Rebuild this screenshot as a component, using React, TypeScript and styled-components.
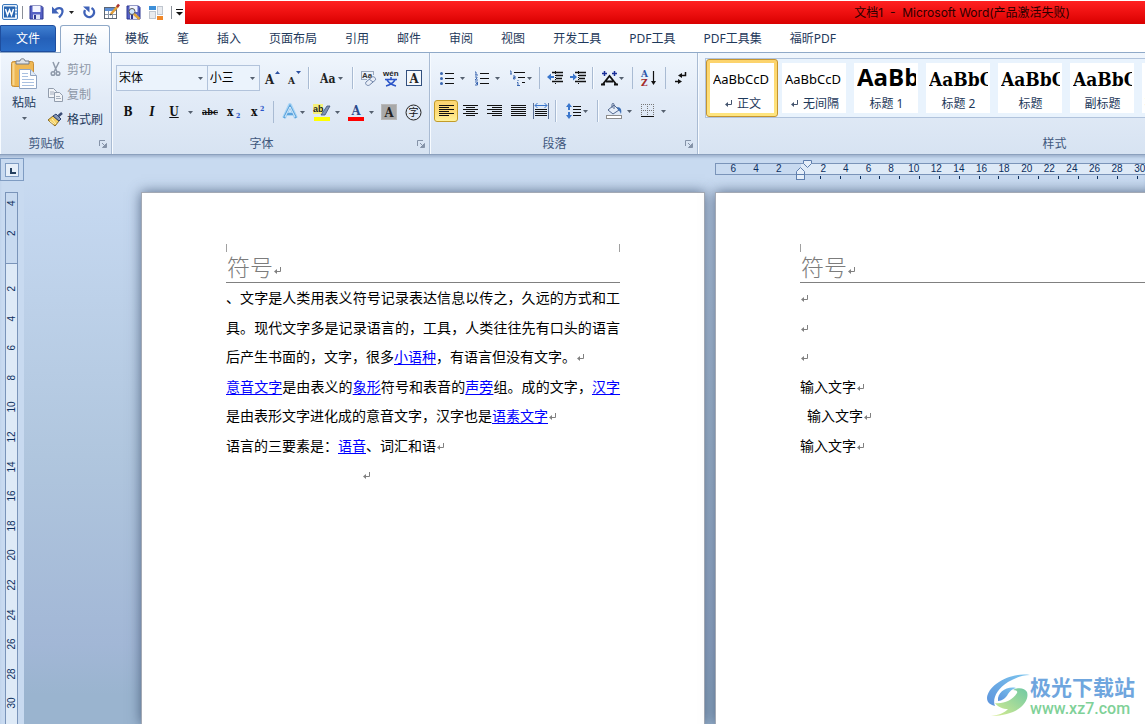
import React from "react";
import styled, { createGlobalStyle, css } from "styled-components";

const ui = `"Noto Sans", "Noto Sans CJK SC", sans-serif`;
const ink = "#1e395b";

const GlobalStyle = createGlobalStyle`
  * { box-sizing: border-box; }
  body { margin: 0; overflow: hidden; font: 12px/16px ${ui}; color: ${ink}; }
  button, select { font: inherit; color: inherit; margin: 0; }
  svg { display: block; flex: none; overflow: visible; }
`;

/* ---------- window ---------- */
const Window = styled.div`
  position: relative;
  display: flex;
  flex-direction: column;
  height: 100vh;
  overflow: hidden;
  background: #fff;
`;

const TitleRow = styled.header`
  display: flex;
  flex: none;
  height: 24px;
`;
const QuickBar = styled.div`
  display: flex;
  align-items: center;
  width: 185px;
  flex: none;
`;
const QuickButton = styled.button<{ $w: number }>`
  display: flex;
  align-items: center;
  justify-content: center;
  gap: 4px;
  width: ${(p) => p.$w}px;
  height: 22px;
  padding: 0;
  border: 0;
  background: none;
`;
const QuickLine = styled.span`
  width: 1px;
  height: 13px;
  margin: 0 3px;
  background: #8a8f98;
`;
const TitleBar = styled.div`
  flex: 1;
  margin-top: 1px;
  padding-right: 75px;
  text-align: right;
  font-family: Inter, "Noto Sans CJK SC", sans-serif;
  line-height: 24px;
  color: #2c0000;
  white-space: pre;
  background: linear-gradient(#ff2222, #ee1010 50%, #d90000);
`;

/* ---------- tabs ---------- */
const TabRow = styled.nav`
  display: flex;
  flex: none;
  height: 29px;
  padding-top: 1px;
  border-bottom: 1px solid #8fa9c8;
`;
const Tab = styled.button<{ $kind?: "file" | "active" }>`
  height: 27px;
  padding: 0 14px;
  border: 0;
  background: none;
  white-space: nowrap;
  ${(p) =>
    p.$kind === "file" &&
    css`
      width: 56px;
      color: #fff;
      border: 1px solid #1f4e9e;
      border-radius: 0 3px 0 0;
      background: linear-gradient(#3f7fd0, #2560b8 50%, #2a6cc6);
    `}
  ${(p) =>
    p.$kind === "active" &&
    css`
      width: 50px;
      height: 28px;
      margin: 0 1px 0 4px;
      padding: 0 12px;
      border: 1px solid #8fa9c8;
      border-bottom: 0;
      border-radius: 3px 3px 0 0;
      background: linear-gradient(#ffffff, #eef5fd);
    `}
`;

/* ---------- ribbon ---------- */
const Ribbon = styled.section`
  display: flex;
  flex: none;
  height: 102px;
  border-bottom: 1px solid #8ba0bd;
  background: linear-gradient(#f0f6fd, #e2ebf7 45%, #d7e3f2);
  overflow: hidden;
`;
const Group = styled.div<{ $w: number }>`
  display: flex;
  flex-direction: column;
  flex: none;
  width: ${(p) => p.$w}px;
  border-right: 1px solid #a9bbd3;
  box-shadow: inset 1px 0 #f7fbff;
`;
const GroupBody = styled.div`
  height: 81px;
  padding: 0 4px;
`;
const GroupFoot = styled.div`
  display: flex;
  align-items: center;
  height: 20px;
`;
const GroupName = styled.span`
  flex: 1;
  text-align: center;
  color: #3f577c;
`;
const Launcher = styled.button`
  width: 18px;
  padding: 0 4px 0 6px;
  border: 0;
  background: none;
`;
const ToolRow = styled.div<{ $top: number }>`
  display: flex;
  align-items: center;
  height: 26px;
  margin-top: ${(p) => p.$top}px;
`;
const Tool = styled.button<{ $w: number; $gap?: number; $on?: boolean }>`
  display: flex;
  align-items: center;
  justify-content: center;
  gap: ${(p) => p.$gap ?? 4}px;
  flex: none;
  width: ${(p) => p.$w}px;
  height: 22px;
  padding: 0;
  border: 1px solid transparent;
  border-radius: 3px;
  background: none;
  ${(p) =>
    p.$on &&
    css`
      border-color: #c29b29;
      background: linear-gradient(#fcd673, #fddb76 50%, #fff29a);
    `}
`;
const Divider = styled.span`
  width: 2px;
  height: 22px;
  margin: 0 3px;
  border-left: 1px solid #a9bbd3;
  background: #f7fbff;
`;
const Letter = styled.span<{ $size?: number; $italic?: boolean; $deco?: string }>`
  font: ${(p) => (p.$italic ? "italic " : "")}bold ${(p) => p.$size ?? 12}px/16px "DejaVu Serif Condensed", serif;
  color: #111;
  text-decoration: ${(p) => p.$deco ?? "none"};
`;

const PasteColumn = styled.div`
  display: flex;
  gap: 4px;
  padding-top: 4px;
`;
const PasteButton = styled.button`
  display: flex;
  flex-direction: column;
  align-items: center;
  gap: 6px;
  width: 40px;
  padding: 1px 0 0;
  border: 0;
  background: none;
`;
const ClipList = styled.div`
  display: flex;
  flex-direction: column;
`;
const ClipButton = styled.button<{ $dim?: boolean }>`
  display: flex;
  align-items: center;
  gap: 4px;
  height: 25px;
  padding: 0;
  border: 0;
  background: none;
  white-space: nowrap;
  color: ${(p) => (p.$dim ? "#8d97a6" : ink)};
  svg { width: 15px; }
`;

const Combo = styled.label<{ $w: number }>`
  position: relative;
  width: ${(p) => p.$w}px;
  height: 26px;
  margin-right: -1px;
  border: 1px solid #b2c3db;
  background: #ebf3fc;
  svg { position: absolute; right: 4px; top: 11px; pointer-events: none; }
`;
const ComboSelect = styled.select`
  appearance: none;
  width: 100%;
  height: 24px;
  padding: 0 2px;
  border: 0;
  background: none;
  color: #000;
`;

/* ---------- style gallery ---------- */
const Gallery = styled.div`
  display: flex;
  height: 60px;
  margin: 5px 0 0 3px;
  border: 1px solid #b1c3dc;
  background: #e9f3fd;
`;
const StyleCard = styled.button<{ $on?: boolean }>`
  flex: none;
  width: 72px;
  height: 58px;
  padding: 3px;
  border: 1px solid ${(p) => (p.$on ? "#c49430" : "transparent")};
  border-radius: 3px;
  background: ${(p) => (p.$on ? "linear-gradient(#fcd36c, #fee57f)" : "none")};
`;
const CardFace = styled.span`
  display: flex;
  flex-direction: column;
  height: 50px;
  padding: 0 2px 0 3px;
  background: #fff;
  overflow: hidden;
`;
const Sample = styled.span<{ $kind: "body" | "head" | "serif" }>`
  height: 33px;
  overflow: hidden;
  text-align: left;
  white-space: nowrap;
  color: #000;
  font: ${(p) =>
    p.$kind === "body"
      ? `13px/32px "Noto Sans", sans-serif`
      : p.$kind === "head"
      ? `bold 24px/28px "Open Sans", sans-serif`
      : `bold 19px/32px "DejaVu Serif Condensed", serif`};
`;
const CardName = styled.span`
  display: flex;
  align-items: center;
  justify-content: center;
  gap: 4px;
  white-space: nowrap;
`;

/* ---------- workspace ---------- */
const Workspace = styled.main`
  display: flex;
  flex: 1;
  min-height: 0;
  background: #c8daf0;
  box-shadow: inset 0 3px 3px -1px #9fb3cf;
`;
const SideColumn = styled.div`
  display: flex;
  flex-direction: column;
  flex: none;
  width: 24px;
`;
const CornerButton = styled.button`
  display: flex;
  align-items: center;
  justify-content: center;
  width: 24px;
  height: 23px;
  margin: 3px 0 11px;
  padding: 0;
  border: 1px solid #7f9cc2;
  background: #c8daf0;
`;
const VRuler = styled.div`
  flex: 1;
  width: 13px;
  margin-left: 5px;
  border: 1px solid #7a94b9;
  border-bottom: 0;
  background: #deeaf7;
  font: 10px/11px "Liberation Sans", sans-serif;
  color: #0c2f5e;
`;
const VMargin = styled.div`
  display: grid;
  grid-auto-rows: 20px;
  row-gap: 10px;
  height: 71px;
  border-bottom: 1px solid #7a94b9;
  background: #c8daf0;
`;
const VBody = styled.div`
  display: grid;
  grid-template-rows: repeat(15, 1fr);
  height: 444px;
  margin-top: 10px;
`;
const VNumber = styled.span`
  writing-mode: vertical-rl;
  transform: rotate(180deg);
  text-align: center;
`;

const Canvas = styled.div`
  display: flex;
  flex-direction: column;
  flex: 1;
  min-width: 0;
  overflow: hidden;
  background: linear-gradient(transparent 24px, #c4d7ef 60px, #b0c6de 300px, #a2b7d6 490px, #9ab4cf 540px);
`;
const RulerStrip = styled.div`
  height: 37px;
  flex: none;
  padding: 8px 0 0 691px;
`;
const HRuler = styled.div`
  position: relative;
  display: flex;
  height: 12px;
  border: 1px solid #7a94b9;
  border-right: 0;
  background: #deeaf7;
  font: 10px/10px "Liberation Sans", sans-serif;
  color: #0c2f5e;
`;
const HMargin = styled.div`
  display: grid;
  grid-template-columns: repeat(3, 1fr);
  flex: none;
  width: 85px;
  padding: 0 11px 0 6px;
  text-align: center;
  background: #c8daf0;
`;
const HBody = styled.div`
  display: grid;
  grid-template-columns: repeat(15, 1fr);
  flex: none;
  width: 339px;
  margin-left: 11px;
  text-align: center;
`;
const Indent = styled.div`
  position: absolute;
  left: 79px;
  top: -4px;
`;
const TickLine = styled.div`
  display: flex;
  justify-content: space-between;
  width: 318px;
  margin: 1px 0 0 105px;
`;
const Tick = styled.i`
  width: 1px;
  height: 3px;
  background: #0c2f5e;
`;

const Pages = styled.div`
  display: flex;
  flex: 1;
  gap: 10px;
  padding-left: 117px;
`;
const Page = styled.article`
  flex: none;
  width: 564px;
  padding: 51px 84px 0;
  border: 1px solid #a3a9b4;
  border-bottom: 0;
  background: #fff;
  box-shadow: 0 0 12px rgba(50, 70, 100, 0.75);
`;
const CropMarks = styled.div`
  height: 8px;
  border: solid #a0a0a0;
  border-width: 0 1px;
`;
const PageHeader = styled.div`
  display: flex;
  align-items: center;
  height: 31px;
  padding-left: 1px;
  border-bottom: 1px solid #808080;
  font: 300 23px/30px "Noto Sans CJK SC", sans-serif;
  color: #7c7c7c;
  svg { margin-top: 8px; }
`;
const HeaderText = styled.span`
  padding-bottom: 2px;
`;
const Lines = styled.div`
  display: grid;
  grid-template-rows: repeat(7, 1fr);
  height: 207px;
  font: 14px/29px "Noto Sans CJK SC", sans-serif;
  color: #000;
`;
const Line = styled.p<{ $full?: boolean; $indent?: number }>`
  margin: 0;
  padding-left: ${(p) => p.$indent ?? 0}px;
  white-space: nowrap;
  text-align-last: ${(p) => (p.$full ? "justify" : "left")};
  svg { display: inline-block; }
`;
const DocLink = styled.a`
  color: #0000ff;
  text-decoration: underline;
  text-underline-offset: 2px;
`;

const Watermark = styled.div`
  position: absolute;
  right: 10px;
  bottom: 6px;
  display: flex;
  align-items: center;
`;
const MarkName = styled.div`
  font: bold 21px/28px "Noto Sans CJK SC", sans-serif;
  color: #6fa6de;
`;
const MarkSite = styled.div`
  font: 500 16px/18px Roboto, sans-serif;
  color: #7fd198;
`;

/* ---------- small drawings ---------- */
const Caret = ({ c = "#55606f" }: { c?: string }) => (
  <svg width="5" height="3"><path d="M0 0h5L2.5 3z" fill={c} /></svg>
);
const Return = ({ c = "#808080" }: { c?: string }) => (
  <svg width="9" height="8" viewBox="0 0 9 8"><path d="M7.5 0v4.5H2" stroke={c} fill="none" /><path d="M1 4.5L4 2v5z" fill={c} /></svg>
);
const LaunchIcon = () => (
  <svg width="8" height="8"><path d="M.5 6V.5H6" stroke="#8593a8" fill="none" /><path d="M3 3l3 3M7.500 3.500v4h-4z" stroke="#8593a8" fill="#8593a8" /></svg>
);

const WordLogo = () => (
  <svg width="16" height="16" viewBox="0 0 16 16">
    <rect x=".5" y=".5" width="15" height="15" rx="1.500" fill="#e8f1fb" stroke="#3b78bd" />
    <path d="M12 4h3M12 7h3M12 10h3" stroke="#3b78bd" />
    <rect x="2" y="2.500" width="11" height="11" fill="#2a66b0" />
    <path d="M3.500 5l2 6 2-5 2 5 2-6" stroke="#fff" strokeWidth="1.500" fill="none" />
  </svg>
);
const SaveIcon = ({ find }: { find?: boolean }) => (
  <svg width="15" height="15" viewBox="0 0 15 15">
    <path d="M1 1h11.500L14 2.500V14H1z" fill="#5561c4" stroke="#2d3690" />
    <rect x="3.500" y="1" width="8" height="6" fill="#f3f5ff" />
    <rect x="4" y="9.500" width="7" height="4.500" fill="#dfe3f5" />
    <rect x="5" y="10" width="2" height="4" fill="#2d3690" />
    {find && <><circle cx="6" cy="6.500" r="3" fill="#cfe6ff" stroke="#555" /><path d="M8 9l5.500 5" stroke="#e0a53a" strokeWidth="2.500" /></>}
  </svg>
);
const UndoIcon = () => (
  <svg width="14" height="14" viewBox="0 0 14 14"><path d="M4 5.500C6 2 12 2 11.500 7c-.3 2.500-2 4-3.500 5.500" stroke="#3f62b8" strokeWidth="2.200" fill="none" /><path d="M1 1.500v7h7z" fill="#3f62b8" /></svg>
);
const RedoIcon = () => (
  <svg width="14" height="14" viewBox="0 0 14 14"><path d="M9.500 3A4.800 4.800 0 1 1 3 5" stroke="#3f62b8" strokeWidth="2.400" fill="none" /><path d="M1 1.500h6.500v6z" fill="#3f62b8" /></svg>
);
const TableEditIcon = () => (
  <svg width="17" height="16" viewBox="0 0 17 16">
    <rect x="1.500" y="3.500" width="12" height="11" fill="#fff" stroke="#5b6573" />
    <rect x="2" y="4" width="11" height="3" fill="#5c8fd6" />
    <path d="M2 10.500h11M5.500 7v7M9.500 7v7" stroke="#8a96a8" />
    <path d="M8 10L15 2" stroke="#e2a03c" strokeWidth="2.500" /><path d="M14 3l2-2.500" stroke="#a33" strokeWidth="2.500" />
    <path d="M7 11.500l.5-2 1.500 1.200z" fill="#333" />
  </svg>
);
const LayoutIcon = () => (
  <svg width="15" height="15" viewBox="0 0 15 15">
    <rect x="0" y="1" width="7" height="4" fill="#3d8fd8" /><rect x="8.500" y="1.500" width="5" height="8" fill="#e8ebef" stroke="#c0c6cf" />
    <rect x=".5" y="6.500" width="6" height="7" fill="#e8ebef" stroke="#c0c6cf" /><rect x="8" y="11" width="6" height="4" fill="#f0882a" />
  </svg>
);
const MoreIcon = () => (
  <svg width="7" height="7"><path d="M0 .5h7" stroke="#111" /><path d="M0 3h7L3.500 6.500z" fill="#111" /></svg>
);

const PasteIcon = () => (
  <svg width="28" height="31" viewBox="0 0 28 31">
    <rect x="1.500" y="3.500" width="22" height="25" rx="2" fill="#efb854" stroke="#c98f36" />
    <rect x="2.500" y="5" width="2" height="22" fill="#f8d68f" />
    <path d="M6 6V3h4c0-3 5-3 5 0h4v3z" fill="#dfe3e8" stroke="#727a86" />
    <path d="M9.500 11.500h11l6 6v13h-17z" fill="#fff" stroke="#8ea3c2" />
    <path d="M20.500 11.500v6h6" fill="#dfe9f5" stroke="#8ea3c2" />
    <path d="M12 15.500h6M12 18.500h6M12 21.500h12M12 24.500h12M12 27.500h12" stroke="#a9c0e0" />
  </svg>
);
const CutIcon = () => (
  <svg width="15" height="15" viewBox="0 0 15 15" fill="none" stroke="#8f9aaa"><path d="M5 0l4 10M11 0L6 10" strokeWidth="1.500" /><circle cx="5" cy="11.500" r="1.800" strokeWidth="1.500" /><circle cx="10" cy="11.500" r="1.800" strokeWidth="1.500" /></svg>
);
const CopyIcon = () => (
  <svg width="15" height="14" viewBox="0 0 15 14" fill="#f1f4f8" stroke="#929dad"><path d="M.5.5h5l3 3v6h-8z" /><path d="M6.500 4.500h5l3 3v6h-8z" /><path d="M2 4h4M2 6h4M8 8.500h4M8 10.500h5" strokeWidth=".8" /></svg>
);
const BrushIcon = () => (
  <svg width="15" height="15" viewBox="0 0 15 15"><path d="M0 8l5-4 6 5-4 5z" fill="#f3cf62" stroke="#8a6a22" /><path d="M2 9l4 3M4 7l4 5" stroke="#fff2b8" /><path d="M5 4l3-2 5 5-2 2z" fill="#8798b8" stroke="#2f4470" /><path d="M10.500 4l3.500-3" stroke="#3b4d75" strokeWidth="2.500" /></svg>
);

const serif = { fontFamily: '"DejaVu Serif Condensed", serif', fontWeight: 700 } as const;
const GrowIcon = ({ down }: { down?: boolean }) => (
  <svg width="16" height="16" viewBox="0 0 16 16"><text x="1" y="14" fontSize={down ? 10 : 13} fill="#222" {...serif}>A</text><path d={down ? "M9 1h5l-2.500 3z" : "M11 4h5l-2.500-3z"} fill="#2a4fa0" /></svg>
);
const CaseIcon = () => (<svg width="18" height="14" viewBox="0 0 18 14"><text x="1" y="12" fontSize="12" fill="#222" {...serif}>Aa</text></svg>);
const ClearIcon = () => (
  <svg width="17" height="17" viewBox="0 0 17 17"><path d="M1 1.500h12M1 9.500h6M1.500 1v8M13.500 1v4" stroke="#9aa8bd" /><text x="2" y="8" fontSize="8" fontFamily="Liberation Sans" fontWeight="700" fill="#333">Aa</text><path d="M6 12l6-5c2-1 4 1 3.500 3l-6 5c-2 1.500-5-1-3.500-3z" fill="#e8eef8" stroke="#6f84a8" /><path d="M9 9l4 3" stroke="#6f84a8" /></svg>
);
const PinyinIcon = () => (
  <svg width="18" height="17" viewBox="0 0 18 17"><text x="1" y="6" fontSize="8" fontFamily="Liberation Sans" fontWeight="700" fill="#222">wén</text><path d="M9 7v2M3 9.500h12M5 10c2 3 5 5 9 6M13 10c-2 3-5 5-9 6" stroke="#2b55c8" strokeWidth="1.500" fill="none" /></svg>
);
const BoxedA = ({ shade }: { shade?: boolean }) => (
  <svg width="16" height="16" viewBox="0 0 16 16"><rect x=".5" y=".5" width="15" height="15" fill={shade ? "#a9a9a9" : "#f4f8fd"} stroke={shade ? "#b9b9b9" : "#33507e"} /><text x="8" y="13" fontSize="13" textAnchor="middle" fill="#222" {...serif}>A</text></svg>
);
const GlowA = () => (
  <svg width="16" height="18" viewBox="0 0 16 18"><path d="M2 15L8 2l6 13M4.500 11h7" stroke="#a9d5f5" strokeWidth="4" fill="none" strokeLinejoin="round" /><path d="M2 15L8 3l6 12M4.500 11h7" stroke="#5ba3dd" strokeWidth="2" fill="none" /><path d="M3 14L8 4l5 10" stroke="#fff" strokeWidth=".8" fill="none" /></svg>
);
const HighlightIcon = () => (
  <svg width="18" height="17" viewBox="0 0 18 17"><rect x="0" y="0" width="10" height="10" fill="#f5f07a" /><text x="0" y="8" fontSize="9" fontFamily="Liberation Sans" fontWeight="700" fill="#222">ab</text><path d="M8 11l6-9h3l-5 9z" fill="#7f93b5" stroke="#3e5278" strokeWidth=".8" /><rect x="1" y="13" width="16" height="4" fill="#ffff00" /></svg>
);
const ColorA = () => (
  <svg width="18" height="17" viewBox="0 0 18 17"><text x="9" y="11" fontSize="13" textAnchor="middle" fill="#2b4a8b" {...serif}>A</text><rect x="1" y="13" width="16" height="4" fill="#ff0000" /></svg>
);
const CircleChar = () => (
  <svg width="17" height="17" viewBox="0 0 17 17"><circle cx="8.500" cy="8.500" r="7.500" fill="none" stroke="#222" /><text x="8.500" y="12" fontSize="10" textAnchor="middle" fontFamily="Noto Sans CJK SC" fill="#111">字</text></svg>
);
const ScriptX = ({ sup }: { sup?: boolean }) => (
  <svg width="14" height="14"><text x="0" y="11" fontSize="12" fill="#111" {...serif}>x</text><text x="9" y={sup ? 6 : 13} fontSize="7" fill="#2b55c8" {...serif}>2</text></svg>
);

const BulletsIcon = () => (
  <svg width="14" height="14" viewBox="0 0 14 14"><g fill="#3a66b0"><circle cx="1.500" cy="2.500" r="1.500" /><circle cx="1.500" cy="7.500" r="1.500" /><circle cx="1.500" cy="12.500" r="1.500" /></g><path d="M5 2.500h9M5 7.500h9M5 12.500h9" stroke="#111" /></svg>
);
const NumbersIcon = () => (
  <svg width="15" height="15" viewBox="0 0 15 15"><path d="M1 1h1v3M1 4h3M1 6h2v1l-2 2h3M1 11h2.500v1.500H2M3.500 12v2H1" stroke="#3a66b0" fill="none" /><path d="M6 2.500h9M6 7.500h9M6 12.500h9" stroke="#111" /></svg>
);
const MultiIcon = () => (
  <svg width="17" height="16" viewBox="0 0 17 16"><path d="M1 1h1v3M1 4h2M4 6h2v3H4.500V7.500H6M9 10v1M8 12.500h1V15M8 15.500h3" stroke="#3a66b0" fill="none" /><path d="M5 2.500h11M9 7.500h7M13 12.500h3" stroke="#111" /></svg>
);
const IndentIcon = ({ inc }: { inc?: boolean }) => (
  <svg width="17" height="14" viewBox="0 0 17 14"><path d="M5 1.500h11M9 4.500h7M9 7.500h6M5 10.500h11" stroke="#111" strokeWidth="1.500" /><path d="M8.500 0v14" stroke="#111" strokeDasharray="1 1" /><path d={inc ? "M7 6L3 2.500V5H0v2h3v2.500z" : "M0 6l4-3.500V5h3v2H4v2.500z"} fill="#3a76cc" /></svg>
);
const ScaleIcon = () => (
  <svg width="17" height="15" viewBox="0 0 17 15"><path d="M2 13L8.500 5 15 13M5 10.500h7M0 13.500h4M13 13.500h4" stroke="#111" strokeWidth="1.800" fill="none" /><path d="M1 2.500h5M11 2.500h5M3.500 0v5M13.500 0v5" stroke="#1a2f98" strokeWidth="1.500" fill="none" /></svg>
);
const SortIcon = () => (
  <svg width="16" height="18" viewBox="0 0 16 18"><text x="0" y="8" fontSize="10" fill="#2b55a8" {...serif}>A</text><text x="0" y="17" fontSize="10" fill="#a32a2a" {...serif}>Z</text><path d="M12.500 2v12" stroke="#111" strokeWidth="1.200" /><path d="M10 12h5l-2.500 4z" fill="#111" /></svg>
);
const MarksIcon = () => (
  <svg width="12" height="13" viewBox="0 0 12 13"><path d="M10.500 0v3.500H6M0 9.500h4" stroke="#111" strokeWidth="1.500" fill="none" /><path d="M3 3.500L7 1v5zM7 9.500L3 7v5z" fill="#111" /></svg>
);
const AlignIcon = ({ d }: { d: string }) => (<svg width="15" height="12" viewBox="0 0 15 12"><path d={d} stroke="#111" /></svg>);
const alignPaths: Record<string, string> = {
  左对齐: "M0 .5h15M0 2.500h10M0 4.500h15M0 6.500h10M0 8.500h15M0 10.500h10",
  居中: "M0 .5h15M3 2.500h9M0 4.500h15M3 6.500h9M0 8.500h15M3 10.500h9",
  右对齐: "M0 .5h15M5 2.500h10M0 4.500h15M5 6.500h10M0 8.500h15M5 10.500h10",
  两端对齐: "M0 .5h15M0 2.500h15M0 4.500h15M0 6.500h15M0 8.500h15M0 10.500h15",
};
const DistributeIcon = () => (
  <svg width="16" height="16" viewBox="0 0 16 16"><path d="M.5 0v16M15.500 0v16" stroke="#5a6f94" /><path d="M2 2.500h12M4.500 0L2 2.500 4.500 5M11.500 0L14 2.500 11.500 5" stroke="#3a76cc" fill="none" /><path d="M2 6.500h12M2 8.500h12M2 10.500h12M2 12.500h12" stroke="#111" /></svg>
);
const SpacingIcon = () => (
  <svg width="16" height="16" viewBox="0 0 16 16"><path d="M3 0l3 4H4v3H2V4H0zM3 16l3-4H4V9H2v3H0z" fill="#3a76cc" /><path d="M7 3.500h8M7 6.500h8M7 9.500h8M7 12.500h8" stroke="#111" /></svg>
);
const BucketIcon = () => (
  <svg width="17" height="16" viewBox="0 0 17 16"><path d="M2 7l6-5 5 5-6 4z" fill="#e6edf7" stroke="#53698f" /><path d="M6 5V1.500c0-1.500 2-1.500 2 0V6" stroke="#53698f" fill="none" /><path d="M11 4c4 0 5 3 4 7-1-2-1-3-3-4z" fill="#3d6fb4" /><rect x=".5" y="12.500" width="15" height="3" fill="#fff" stroke="#8d8d8d" /></svg>
);
const BordersIcon = () => (
  <svg width="14" height="14" viewBox="0 0 14 14"><path d="M.5 0v12M6.500 0v12M12.500 0v12M0 .5h13M0 6.500h13" stroke="#777" strokeDasharray="1 1" /><path d="M0 12.500h13" stroke="#111" /></svg>
);

const Swirl = () => (
  <svg width="44" height="44" viewBox="0 0 44 44">
    <defs>
      <linearGradient id="sb" x1="0" y1="1" x2="1" y2="0"><stop offset="0" stopColor="#5c93dc" /><stop offset="1" stopColor="#7cc5ee" /></linearGradient>
      <linearGradient id="sg" x1="0" y1="1" x2="1" y2="0"><stop offset="0" stopColor="#d9ec8f" /><stop offset="1" stopColor="#6fc9a4" /></linearGradient>
    </defs>
    <path d="M44 2C24-1 2 12 1 25c0 5 4 7 8 8-3-7 2-17 13-24C29 5 36 2 44 2z" fill="url(#sb)" />
    <path d="M9 30c8 1 17-2 22-10 1-2-1-3-4-3 5-3 12-2 14 2 3 9-8 24-36 24 8-1 13-3 17-7-5 0-10-2-13-6z" fill="url(#sg)" />
    <path d="M12 28c-1-9 9-15 18-13-4 1-6 3-8 6-2 4-6 7-10 7z" fill="url(#sb)" />
  </svg>
);

/* ---------- content ---------- */
const tabs = ["模板", "笔", "插入", "页面布局", "引用", "邮件", "审阅", "视图", "开发工具", "PDF工具", "PDF工具集", "福昕PDF"];
const cards: { name: string; text: string; kind: "body" | "head" | "serif"; mark?: boolean }[] = [
  { name: "正文", text: "AaBbCcD", kind: "body", mark: true },
  { name: "无间隔", text: "AaBbCcD", kind: "body", mark: true },
  { name: "标题 1", text: "AaBb", kind: "head" },
  { name: "标题 2", text: "AaBbC", kind: "serif" },
  { name: "标题", text: "AaBbC", kind: "serif" },
  { name: "副标题", text: "AaBbC", kind: "serif" },
  { name: "不明显强调", text: "AaBbCcD", kind: "body" },
];
const evens = Array.from({ length: 15 }, (_, i) => (i + 1) * 2);
const L = ({ children }: { children: string }) => <DocLink href="#">{children}</DocLink>;

const Foot = ({ name }: { name: string }) => (
  <GroupFoot>
    <GroupName>{name}</GroupName>
    <Launcher aria-label={name}><LaunchIcon /></Launcher>
  </GroupFoot>
);

export default function App() {
  return (
    <Window>
      <GlobalStyle />
      <TitleRow>
        <QuickBar>
          <QuickButton $w={19} aria-label="Word"><WordLogo /></QuickButton>
          <QuickLine />
          <QuickButton $w={20} aria-label="保存"><SaveIcon /></QuickButton>
          <QuickButton $w={32} aria-label="撤销"><UndoIcon /><Caret c="#222" /></QuickButton>
          <QuickButton $w={22} aria-label="重复"><RedoIcon /></QuickButton>
          <QuickButton $w={22} aria-label="编辑表格"><TableEditIcon /></QuickButton>
          <QuickButton $w={22} aria-label="查找"><SaveIcon find /></QuickButton>
          <QuickButton $w={24} aria-label="版式"><LayoutIcon /></QuickButton>
          <QuickLine />
          <QuickButton $w={8} aria-label="更多"><MoreIcon /></QuickButton>
        </QuickBar>
        <TitleBar>{"文档1  -  Microsoft Word(产品激活失败)"}</TitleBar>
      </TitleRow>

      <TabRow>
        <Tab $kind="file">文件</Tab>
        <Tab $kind="active">开始</Tab>
        {tabs.map((t) => <Tab key={t}>{t}</Tab>)}
      </TabRow>

      <Ribbon>
        <Group $w={112}>
          <GroupBody>
            <PasteColumn>
              <PasteButton><PasteIcon /><span>粘贴</span><Caret /></PasteButton>
              <ClipList>
                <ClipButton $dim><CutIcon />剪切</ClipButton>
                <ClipButton $dim><CopyIcon />复制</ClipButton>
                <ClipButton><BrushIcon />格式刷</ClipButton>
              </ClipList>
            </PasteColumn>
          </GroupBody>
          <Foot name="剪贴板" />
        </Group>

        <Group $w={318}>
          <GroupBody>
            <ToolRow $top={12}>
              <Combo $w={93}><ComboSelect aria-label="字体"><option>宋体</option></ComboSelect><Caret /></Combo>
              <Combo $w={54}><ComboSelect aria-label="字号"><option>小三</option></ComboSelect><Caret /></Combo>
              <Tool $w={26} aria-label="增大字体"><GrowIcon /></Tool>
              <Tool $w={20} aria-label="缩小字体"><GrowIcon down /></Tool>
              <Divider />
              <Tool $w={36} $gap={1} aria-label="更改大小写"><CaseIcon /><Caret /></Tool>
              <Divider />
              <Tool $w={22} aria-label="清除格式"><ClearIcon /></Tool>
              <Tool $w={24} aria-label="拼音指南"><PinyinIcon /></Tool>
              <Tool $w={22} aria-label="字符边框"><BoxedA /></Tool>
            </ToolRow>
            <ToolRow $top={8}>
              <Tool $w={24}><Letter>B</Letter></Tool>
              <Tool $w={24}><Letter $italic>I</Letter></Tool>
              <Tool $w={34} $gap={9}><Letter $deco="underline">U</Letter><Caret /></Tool>
              <Tool $w={24}><Letter $size={9} $deco="line-through">abc</Letter></Tool>
              <Tool $w={24} aria-label="下标"><ScriptX /></Tool>
              <Tool $w={24} aria-label="上标"><ScriptX sup /></Tool>
              <Divider />
              <Tool $w={32} $gap={2} aria-label="文本效果"><GlowA /><Caret /></Tool>
              <Tool $w={34} aria-label="突出显示"><HighlightIcon /><Caret /></Tool>
              <Tool $w={34} aria-label="字体颜色"><ColorA /><Caret /></Tool>
              <Tool $w={24} aria-label="字符底纹"><BoxedA shade /></Tool>
              <Tool $w={24} aria-label="带圈字符"><CircleChar /></Tool>
            </ToolRow>
          </GroupBody>
          <Foot name="字体" />
        </Group>

        <Group $w={268}>
          <GroupBody>
            <ToolRow $top={12}>
              <Tool $w={36} $gap={6} aria-label="项目符号"><BulletsIcon /><Caret /></Tool>
              <Tool $w={34} $gap={6} aria-label="编号"><NumbersIcon /><Caret /></Tool>
              <Tool $w={32} $gap={1} aria-label="多级列表"><MultiIcon /><Caret /></Tool>
              <Divider />
              <Tool $w={24} aria-label="减少缩进"><IndentIcon /></Tool>
              <Tool $w={22} aria-label="增加缩进"><IndentIcon inc /></Tool>
              <Divider />
              <Tool $w={32} $gap={1} aria-label="中文版式"><ScaleIcon /><Caret /></Tool>
              <Divider />
              <Tool $w={26} aria-label="排序"><SortIcon /></Tool>
              <Divider />
              <Tool $w={24} aria-label="显示标记"><MarksIcon /></Tool>
            </ToolRow>
            <ToolRow $top={7}>
              {Object.entries(alignPaths).map(([name, d], i) => (
                <Tool key={name} $w={24} $on={i === 0} aria-label={name}><AlignIcon d={d} /></Tool>
              ))}
              <Tool $w={22} aria-label="分散对齐"><DistributeIcon /></Tool>
              <Divider />
              <Tool $w={34} $gap={1} aria-label="行距"><SpacingIcon /><Caret /></Tool>
              <Divider />
              <Tool $w={34} aria-label="底纹"><BucketIcon /><Caret /></Tool>
              <Tool $w={34} $gap={6} aria-label="边框"><BordersIcon /><Caret /></Tool>
            </ToolRow>
          </GroupBody>
          <Foot name="段落" />
        </Group>

        <Group $w={732}>
          <GroupBody>
            <Gallery>
              {cards.map((c, i) => (
                <StyleCard key={c.name} $on={i === 0}>
                  <CardFace>
                    <Sample $kind={c.kind}>{c.text}</Sample>
                    <CardName>{c.mark && <Return c="#44546e" />}{c.name}</CardName>
                  </CardFace>
                </StyleCard>
              ))}
            </Gallery>
          </GroupBody>
          <Foot name="样式" />
        </Group>
      </Ribbon>

      <Workspace>
        <SideColumn>
          <CornerButton aria-label="制表符">
            <svg width="14" height="14"><rect x=".5" y=".5" width="13" height="13" fill="#e6eff9" stroke="#7f9cc2" /><path d="M6 5v5h5" stroke="#25405f" strokeWidth="2" fill="none" /></svg>
          </CornerButton>
          <VRuler>
            <VMargin><VNumber>4</VNumber><VNumber>2</VNumber></VMargin>
            <VBody>{evens.map((n) => <VNumber key={n}>{n}</VNumber>)}</VBody>
          </VRuler>
        </SideColumn>
        <Canvas>
          <RulerStrip>
            <HRuler>
              <HMargin><span>6</span><span>4</span><span>2</span></HMargin>
              <HBody>{evens.map((n) => <span key={n}>{n}</span>)}</HBody>
              <Indent>
                <svg width="20" height="22" viewBox="0 0 20 22" fill="#e6eff9" stroke="#5f7fae"><path d="M8.500.5h8v3l-4 4-4-4z" /><path d="M1.500 14.500v-3l4-4 4 4v3z" /><rect x="1.500" y="14.500" width="8" height="5" /></svg>
              </Indent>
            </HRuler>
            <TickLine>{Array.from({ length: 17 }, (_, i) => <Tick key={i} />)}</TickLine>
          </RulerStrip>
          <Pages>
            <Page>
              <CropMarks />
              <PageHeader><HeaderText>符号</HeaderText><Return /></PageHeader>
              <Lines>
                <Line $full>、文字是人类用表义符号记录表达信息以传之，久远的方式和工</Line>
                <Line $full>具。现代文字多是记录语言的，工具，人类往往先有口头的语言</Line>
                <Line>后产生书面的，文字，很多<L>小语种</L>，有语言但没有文字。<Return /></Line>
                <Line $full><L>意音文字</L>是由表义的<L>象形</L>符号和表音的<L>声旁</L>组。成的文字，<L>汉字</L></Line>
                <Line>是由表形文字进化成的意音文字，汉字也是<L>语素文字</L><Return /></Line>
                <Line>语言的三要素是：<L>语音</L>、词汇和语<Return /></Line>
                <Line $indent={136}><Return /></Line>
              </Lines>
            </Page>
            <Page>
              <CropMarks />
              <PageHeader><HeaderText>符号</HeaderText><Return /></PageHeader>
              <Lines>
                <Line><Return /></Line>
                <Line><Return /></Line>
                <Line><Return /></Line>
                <Line>输入文字<Return /></Line>
                <Line $indent={7}>输入文字<Return /></Line>
                <Line>输入文字<Return /></Line>
              </Lines>
            </Page>
          </Pages>
        </Canvas>
      </Workspace>

      <Watermark>
        <Swirl />
        <div>
          <MarkName>极光下载站</MarkName>
          <MarkSite>www.xz7.com</MarkSite>
        </div>
      </Watermark>
    </Window>
  );
}
